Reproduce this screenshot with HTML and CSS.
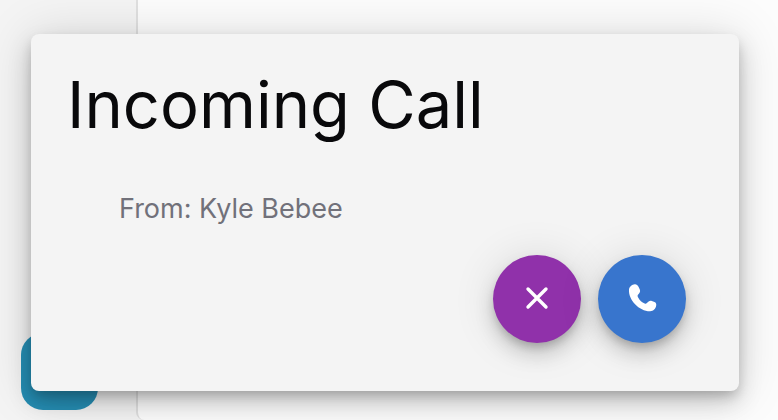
FILE: index.html
```
<!DOCTYPE html>
<html lang="en">
<head>
<meta charset="utf-8">
<title>Incoming Call</title>
<link rel="stylesheet" href="styles.css">
</head>
<body>
<div class="app">
  <aside class="sidebar"><button class="launcher" type="button" aria-label="New"></button></aside>
  <main class="content"></main>
</div>
<section class="call" role="dialog" aria-labelledby="call-title">
  <h1 class="call-title" id="call-title">Incoming Call</h1>
  <p class="call-from">From: Kyle Bebee</p>
  <div class="call-actions">
    <button class="fab decline" type="button" aria-label="Decline">
      <svg class="icon" viewBox="0 0 32 32" aria-hidden="true"><path d="M7 6 25 24M25 6 7 24" fill="none" stroke="currentColor" stroke-width="3.4" stroke-linecap="round"/></svg>
    </button>
    <button class="fab accept" type="button" aria-label="Accept">
      <svg class="icon" viewBox="0 0 32 32" aria-hidden="true"><path fill="currentColor" d="M3 6.5C3.3 3.6 6 1.4 8.8 1.2c1.700-.1 2.900 1 3.700 2.500l1.300 2.700c.9 2-.2 3.500-1.800 5.400-.6.800-.5 1.500 0 2.400 1.700 3.200 3.900 5.200 6.700 6.400.9.400 1.500.300 2.200-.5 1.400-1.700 2.800-2.900 4.900-2.200l2.700 1.200c1.500.7 2 1.900 1.700 3.500-.5 3.200-2.800 5.600-6 5.700C13.500 28.500 2.200 17 3 6.500Z"/></svg>
    </button>
  </div>
</section>
</body>
</html>
```
FILE: styles.css
```
* {
  box-sizing: border-box;
}

body {
  margin: 0;
  overflow: hidden;
  background: #f4f4f4;
  font-family: Inter, "Liberation Sans", sans-serif;
}

.app {
  display: grid;
  grid-template-columns: 136px 1fr;
  min-height: 100vh;
}

.sidebar {
  display: flex;
  align-items: flex-end;
  padding: 0 0 10px 21px;
}

.launcher {
  width: 77px;
  height: 77px;
  border: 0;
  border-radius: 22px;
  background: #268eb4;
}

.content {
  border-left: 2px solid #e0e0e0;
  border-bottom-left-radius: 8px;
  background: #fcfcfc;
}

.call {
  position: absolute;
  top: 34px;
  right: 39px;
  left: 31px;
  padding: 31px 53px 48px 36px;
  border-radius: 8px;
  background: #f4f4f4;
  box-shadow: 0 6px 12px -2px rgba(0, 0, 0, .2), 0 12px 24px 0 rgba(0, 0, 0, .16), 0 2px 50px 2px rgba(0, 0, 0, .13);
}

.call-title {
  margin: 0;
  color: #09090b;
  font-size: 65px;
  font-weight: 400;
  line-height: 80px;
}

.call-from {
  margin: 44px 0 0 52px;
  color: #71717a;
  font-size: 27px;
  line-height: 40px;
}

.call-actions {
  display: flex;
  justify-content: flex-end;
  gap: 17px;
  margin-top: 26px;
}

.fab {
  display: grid;
  place-items: center;
  width: 88px;
  height: 88px;
  padding: 0;
  border: 0;
  border-radius: 50%;
  color: #fff;
  box-shadow: 0 6px 10px -2px rgba(0, 0, 0, .2), 0 12px 20px 0 rgba(0, 0, 0, .14), 0 2px 44px 0 rgba(0, 0, 0, .12);
}

.decline {
  background: #9031aa;
}

.accept {
  background: #3875cd;
}

.icon {
  width: 32px;
  height: 32px;
}
```
